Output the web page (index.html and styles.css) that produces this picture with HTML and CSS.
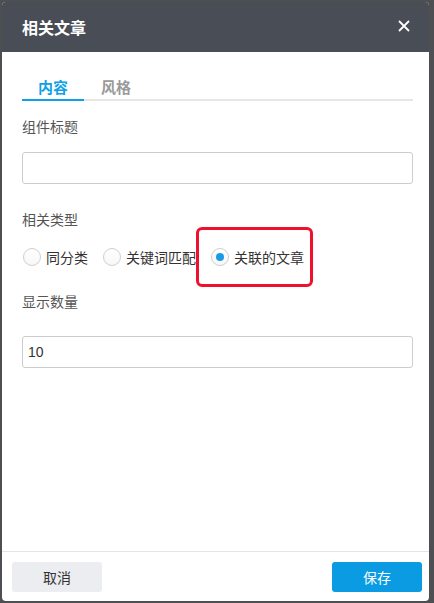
FILE: index.html
```html
<!DOCTYPE html>
<html>
<head>
    <meta charset="utf-8">
    <meta name="viewport" content="width=device-width, initial-scale=1">
    <title>相关文章</title>
    <link rel="stylesheet" href="styles.css">
</head>
<body>
    <div class="dialog">
        <div class="dialog-header">
            <h2>相关文章</h2>
            <span class="close-button">
                <svg width="12" height="12" viewBox="0 0 12 12">
                    <path d="M1 1 L11 11 M11 1 L1 11" stroke="#fff" stroke-width="1.8" fill="none"/>
                </svg>
            </span>
        </div>

        <div class="dialog-body">
            <div class="tabs">
                <div class="tab active">内容</div>
                <div class="tab">风格</div>
            </div>

            <div class="field-label first">组件标题</div>
            <input class="text-input" type="text" value="">

            <div class="field-label">相关类型</div>
            <div class="radio-group">
                <label class="radio-option">
                    <span class="radio"></span>同分类
                </label>
                <label class="radio-option">
                    <span class="radio"></span>关键词匹配
                </label>
                <label class="radio-option highlighted">
                    <span class="radio checked"></span>关联的文章
                </label>
            </div>

            <div class="field-label count">显示数量</div>
            <input class="text-input count-input" type="text" value="10">
        </div>

        <div class="dialog-footer">
            <button class="btn btn-cancel">取消</button>
            <button class="btn btn-save">保存</button>
        </div>
    </div>
</body>
</html>
```

FILE: styles.css
```css
body {
    font-family: "Noto Sans CJK SC", "Noto Sans", Arial, sans-serif;
    margin: 0;
    padding: 2px 0 0 2px;
    background-color: #4e4f52;
    height: 603px;
    box-sizing: border-box;
    overflow: hidden;
}
.dialog {
    width: 427px;
    height: 599px;
    background: white;
    border-radius: 4px;
    overflow: hidden;
    display: flex;
    flex-direction: column;
}
.dialog-header {
    height: 50px;
    flex-shrink: 0;
    background: #494d55;
    display: flex;
    align-items: center;
    justify-content: space-between;
    padding: 0 19px 0 20px;
}
.dialog-header h2 {
    margin: 0;
    font-size: 16px;
    font-weight: bold;
    color: white;
    line-height: 20px;
    margin-top: -1px;
}
.close-button {
    display: flex;
    width: 12px;
    height: 12px;
    margin-top: -3px;
}

.dialog-body {
    flex: 1;
    padding: 0 16px 0 20px;
}
.tabs {
    display: flex;
    margin-top: 24px;
    border-bottom: 2px solid #e6e6e6;
}
.tab {
    font-size: 15px;
    font-weight: bold;
    line-height: 22px;
    padding: 0 16px 1px;
    color: #9a9a9a;
}
.tab + .tab {
    padding-left: 17px;
}
.tab.active {
    color: #0ea1e6;
    border-bottom: 2px solid #0ea1e6;
    margin-bottom: -2px;
}

.field-label {
    font-size: 14px;
    line-height: 20px;
    color: #555;
    margin-top: 25px;
}
.field-label.first {
    margin-top: 15px;
}
.text-input {
    display: block;
    box-sizing: border-box;
    width: 100%;
    height: 32px;
    margin-top: 16px;
    border: 1px solid #ccc;
    border-radius: 3px;
    padding: 0 5px;
    font-family: "Liberation Sans", Arial, sans-serif;
    font-size: 14px;
    color: #333;
    outline: none;
}
.count-input {
    margin-top: 25px;
}

.radio-group {
    display: flex;
    align-items: center;
    margin-top: 18px;
    height: 20px;
    padding-left: 1px;
}
.radio-option {
    position: relative;
    display: flex;
    align-items: center;
    gap: 5px;
    font-size: 14px;
    color: #333;
    margin-right: 15px;
}
.radio-option.highlighted::after {
    content: '';
    position: absolute;
    left: -15px;
    right: -9px;
    top: -20px;
    bottom: -20px;
    border: 3px solid #f0102c;
    border-radius: 6px;
}
.radio {
    width: 18px;
    height: 18px;
    box-sizing: border-box;
    border: 1px solid #cfcfcf;
    border-radius: 50%;
    background: linear-gradient(#fff, #f7f7f7);
    display: flex;
    align-items: center;
    justify-content: center;
}
.radio.checked::before {
    content: '';
    width: 8px;
    height: 8px;
    border-radius: 50%;
    background: #1a9be6;
}
.field-label.count {
    margin-top: 24px;
}

.dialog-footer {
    flex-shrink: 0;
    border-top: 1px solid #e5e5e5;
    display: flex;
    justify-content: space-between;
    padding: 10px 7px 9px 10px;
}
.btn {
    width: 90px;
    height: 30px;
    border: none;
    border-radius: 3px;
    font-family: "Noto Sans CJK SC", sans-serif;
    font-size: 14px;
}
.btn-cancel {
    background: #ebedf0;
    color: #333;
}
.btn-save {
    background: #0a9be3;
    color: white;
}
```
